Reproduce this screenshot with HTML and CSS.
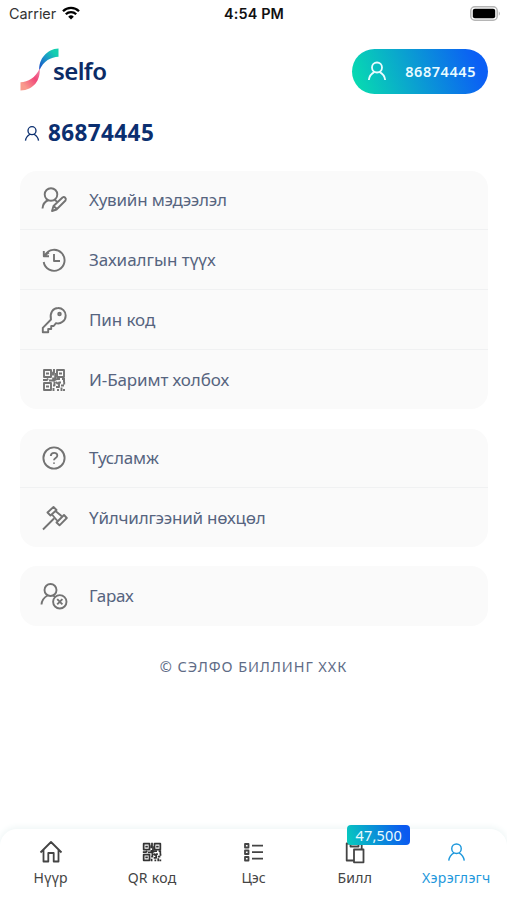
FILE: index.html
```html
<!DOCTYPE html>
<html lang="mn">
<head>
<meta charset="utf-8">
<meta name="viewport" content="width=device-width, initial-scale=1">
<title>Selfo</title>
<link rel="stylesheet" href="styles.css">
</head>
<body>
<svg class="defs" width="0" height="0" aria-hidden="true">
  <symbol id="person" viewBox="0 0 24 24"><circle cx="12" cy="7.800" r="6"/><path d="M2.200 22.800C2.800 18 5.500 15 9 13.100M21.800 22.800C21.200 18 18.500 15 15 13.100"/></symbol>
  <symbol id="qr" viewBox="0 0 24 24"><path d="M2 2h7v7H2zM15 2h7v7h-7zM2 15h7v7H2z"/><path d="M4 5.500h3M17 5.500h3M4 18.500h3M12 1v3.500h-1v3M13.200 5v5.500h-3M1 12h4l1-1.500M7 12.500h5l3-1.500h3M20 11h3M21 13H23M12.500 13.500v4H11M11.500 20v3M14 19h3v-4.500h2M14 14l2 2M16 23v-2M19 17.500h3M22.200 14v2.500M19.500 19.500V23M22 21v2"/></symbol>
</svg>
<header class="status">
  <div class="carrier"><span>Carrier</span>
    <svg width="18" height="14" viewBox="0 0 18 14"><path d="M9 13.500 6.200 10.700a4 4 0 0 1 5.600 0z" fill="#000"/><path d="M1 5.200a11.300 11.300 0 0 1 16 0M3.800 8.300a7.400 7.400 0 0 1 10.400 0" fill="none" stroke="#000" stroke-width="2.300"/></svg>
  </div>
  <b class="time">4:54 PM</b>
  <svg class="battery" width="31" height="15" viewBox="0 0 31 15"><rect x=".8" y=".8" width="26.400" height="13.400" rx="4" fill="#fff" stroke="#b5b5b5" stroke-width="1.500"/><rect x="2.800" y="2.800" width="22.400" height="9.400" rx="2" fill="#000"/><path d="M28.800 5.200q2 2.300 0 4.600z" fill="#aaa"/></svg>
</header>
<section class="brandbar">
  <div class="logo">
    <svg width="40" height="44" viewBox="0 0 40 44">
      <defs>
        <linearGradient id="top" x1="0" y1="1" x2="1" y2="0"><stop offset="0" stop-color="#1648c8"/><stop offset=".45" stop-color="#1b96c8"/><stop offset=".8" stop-color="#14cfb0"/></linearGradient>
        <linearGradient id="bottom" x1="0" y1="1" x2="1" y2="0"><stop offset=".2" stop-color="#f99a8c"/><stop offset=".65" stop-color="#f0487a"/><stop offset="1" stop-color="#f28aaa"/></linearGradient>
      </defs>
      <path d="M38.500 .5v8.300C31 9 23.500 13 19.300 22.500 18.500 11 27 1 38.500 .5z" fill="url(#top)"/>
      <path d="M.500 42.500v-8.300C8 34 15.500 30 19.700 20.500 20.500 32 14 42 .500 42.500z" fill="url(#bottom)"/>
    </svg>
    <span class="wordmark">selfo</span>
  </div>
  <div class="account"><svg class="line" width="20" height="20"><use href="#person"/></svg><b>86874445</b></div>
</section>
<h1><svg class="line" width="16" height="17"><use href="#person"/></svg><span>86874445</span></h1>
<main>
  <ul class="card">
    <li><svg class="line" width="28" height="28" viewBox="0 0 28 28"><circle cx="11" cy="8.500" r="6.300"/><path d="M2.500 22.500c.3-4.300 2.500-7.100 6-8.500M14.500 14l2.500 1.500M12 25l1.500-5 9-8.500c2-1.200 4.200.8 3 3l-9 9zM13.500 20l4 3.500"/></svg><span class="t1">Хувийн мэдээлэл</span></li>
    <li><svg class="line" width="28" height="28" viewBox="0 0 28 28"><path d="M5 9A10.500 10.500 0 1 1 3.700 16M3.800 5v5.200H9M4.500 9.500 9 6.500M14 8v7h6"/></svg><span class="t2">Захиалгын түүх</span></li>
    <li><svg class="line" width="28" height="28" viewBox="0 0 28 28"><path d="m11 13.500-8.200 8.300v4.400h5.400V23h3v-3h2.500l2.300-2.800c4.500 1.500 9.700-2.500 9.700-7.700a7.500 7.500 0 0 0-7.700-7.500C13 2 9.500 7 11 13.500z"/><circle cx="19.500" cy="8" r="1.300"/></svg><span class="t3">Пин код</span></li>
    <li><svg class="line" width="28" height="28" viewBox="-2 -2 28 28"><use href="#qr" width="24" height="24"/></svg><span class="t4">И-Баримт холбох</span></li>
  </ul>
  <ul class="card">
    <li><svg class="line" width="28" height="28" viewBox="0 0 28 28"><circle cx="14" cy="14" r="10.600"/><path d="M10.800 12c.2-4.300 6.700-4 6.500-.3-.1 2.200-3.300 2.300-3.300 4.500M14 18.500v1.300"/></svg><span class="t5">Тусламж</span></li>
    <li><svg class="line" width="28" height="28" viewBox="0 0 28 28"><path d="m3 25.500 11-11M7.500 8.500l6-5.500 3 3-6 5.500zM12 10.500l5 6M15.500 7l6 5M16.500 18.500l7.500-7.500 2.800 3-7.300 7.300z"/></svg><span class="t6">Үйлчилгээний нөхцөл</span></li>
  </ul>
  <ul class="card single">
    <li><svg class="line" width="28" height="28" viewBox="0 0 28 28"><circle cx="10.500" cy="8" r="6"/><path d="M1.500 22.500c.3-4 2.500-7 6-9M13 13.500l2.500 1.500"/><circle cx="19.800" cy="19.800" r="6.700"/><path d="m17.200 17.200 5.200 5.200m0-5.200-5.200 5.200"/></svg><span class="t7">Гарах</span></li>
  </ul>
</main>
<p class="copyright">© СЭЛФО БИЛЛИНГ ХХК</p>
<nav>
  <a><svg class="line" width="24" height="24" viewBox="0 0 24 24"><path d="M1.500 12.500 12 2l10.500 10.500M4.500 10v11.500h4.800V13h5.400v8.500h4.800V10"/></svg><span class="n1">Нүүр</span></a>
  <a><svg class="line qr" width="20" height="24"><use href="#qr"/></svg><span class="n2">QR код</span></a>
  <a><svg class="line" width="24" height="24" viewBox="0 0 24 24"><path d="M3 4h3.500v3.500H3zM3 10.500h3.500V14H3zM3 17h3.500v3.500H3zM10 5.700h11M10 12.200h11M10 18.700h11"/></svg><span class="n3">Цэс</span></a>
  <a><svg class="line" width="24" height="24" viewBox="0 0 24 24"><path d="M10.500 20.500H3.700V3.500h15v5M7.500 3.500v3h8v-3M11 9.500h9.500v12.800H11z"/></svg><span class="n4">Билл</span><em>47,500</em></a>
  <a class="active"><svg class="line" width="19" height="24"><use href="#person"/></svg><span class="n5">Хэрэглэгч</span></a>
</nav>
</body>
</html>
```
FILE: styles.css
```css
* { box-sizing: border-box; }
body {
  margin: 0;
  height: 900px;
  overflow: hidden;
  display: flex;
  flex-direction: column;
  background: #fff;
  font-family: "Noto Sans", "Open Sans", sans-serif;
  color: #56647f;
}
svg { flex: none; display: block; }
.defs { position: absolute; }
.line { fill: none; stroke: currentColor; stroke-width: 1.7; stroke-linejoin: round; }
.status {
  height: 27px;
  padding: 0 6px 0 9px;
  display: grid;
  grid-template-columns: 1fr auto 1fr;
  align-items: center;
  font: 14.400px Inter, sans-serif;
  color: #111;
}
.carrier { display: flex; align-items: center; gap: 6px; color: #333; }
.carrier svg { margin-top: -2px; }
.time { font-weight: 600; letter-spacing: .15px; margin-left: -2px; }
.battery { justify-self: end; margin-top: -1px; }
.brandbar {
  margin: 21px 19px 0 20px;
  height: 46px;
  display: flex;
  justify-content: space-between;
  align-items: center;
}
.logo { display: flex; align-items: center; margin-top: -2px; }
.wordmark {
  margin: 2px 0 0 -7px;
  font: 600 24px/30px "Noto Sans", sans-serif;
  letter-spacing: -.6px;
  color: #0b2b66;
}
.account {
  width: 136px;
  height: 45px;
  padding: 0 12px 0 15px;
  border-radius: 23px;
  display: flex;
  align-items: center;
  justify-content: space-between;
  color: #e9fbff;
  background: linear-gradient(70deg, #07dcb0 3%, #0aa9cc 38%, #0b5ff5 90%);
  font-size: 14.500px;
}
.account .line { stroke-width: 2.2; }
.account b { font-weight: 600; letter-spacing: .55px; }
h1 {
  margin: 20px 0 0 24px;
  height: 38px;
  display: flex;
  align-items: center;
  gap: 8px;
  font-size: 22.500px;
  font-weight: 700;
  letter-spacing: .4px;
  color: #0b2f70;
}
h1 .line { stroke-width: 2; }
h1 span { margin-top: -2px; }
main { margin: 19px 19px 0 20px; display: flex; flex-direction: column; gap: 20px; }
.card { margin: 0; padding: 0; list-style: none; background: #fafafa; border-radius: 17px; }
.card li {
  height: 60px;
  padding-left: 20px;
  display: flex;
  align-items: center;
  gap: 21px;
  font-size: 17px;
}
.card li:not(:last-child) { border-bottom: 1px solid #f0f1f2; }
.card li:first-child:not(:last-child),
.card li:last-child:not(:first-child) { height: 59px; }
.single { margin-top: -1px; }
.card li .line { color: #737373; stroke-width: 1.900; }
.t1 { letter-spacing: -.2px; }
.t3, .t4 { letter-spacing: -.1px; }
.t5 { letter-spacing: -.2px; }
.t6, .t7 { letter-spacing: -.22px; }
.t1, .t5, .t7 { padding-bottom: 2px; }
.copyright { margin: 28px 0 0; text-align: center; font-size: 14.500px; line-height: 24px; letter-spacing: .9px; color: #5e6b86; }
nav {
  margin-top: auto;
  height: 71px;
  padding-top: 11px;
  display: flex;
  border-radius: 17px 17px 0 0;
  box-shadow: 0 -1px 6px 1px #eff6f6;
  background: #fff;
}
nav a {
  flex: 1 1 0;
  min-width: 0;
  position: relative;
  display: flex;
  flex-direction: column;
  align-items: center;
  font-size: 14px;
  line-height: 27px;
  color: #444;
  white-space: nowrap;
}
nav .line { stroke-width: 1.8; }
nav .qr { color: #333; stroke-width: 2.1; }
.n1, .n4 { letter-spacing: .3px; }
.n2, .n5 { letter-spacing: .3px; }
nav .active { color: #1e98dc; }
nav em {
  position: absolute;
  left: 43px;
  top: -15px;
  width: 63px;
  height: 20px;
  border-radius: 4px;
  text-align: center;
  font: 14.500px/20px "Noto Sans", sans-serif;
  letter-spacing: .2px;
  color: #e9fbff;
  background: linear-gradient(70deg, #07cdbd, #0b59f0 90%);
}
```
